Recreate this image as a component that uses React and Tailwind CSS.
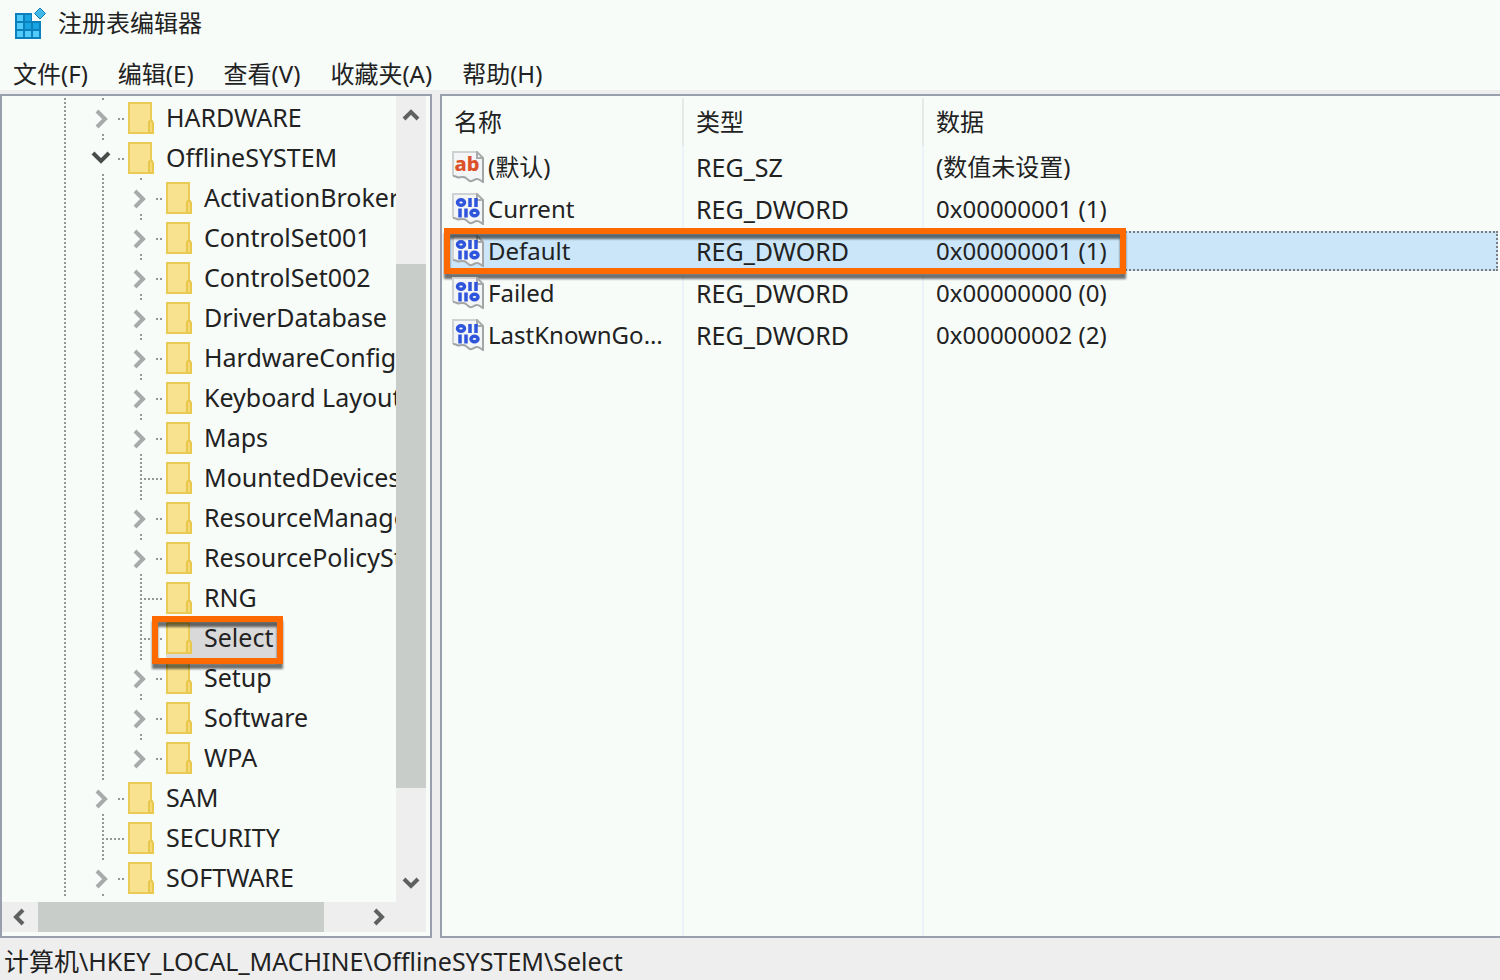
import { useState } from "react";

const MENU = ["文件(F)", "编辑(E)", "查看(V)", "收藏夹(A)", "帮助(H)"];

const TREE = [
  { name: "HARDWARE", level: 1, state: "closed" },
  { name: "OfflineSYSTEM", level: 1, state: "open" },
  { name: "ActivationBroker", level: 2, state: "closed" },
  { name: "ControlSet001", level: 2, state: "closed" },
  { name: "ControlSet002", level: 2, state: "closed" },
  { name: "DriverDatabase", level: 2, state: "closed" },
  { name: "HardwareConfig", level: 2, state: "closed" },
  { name: "Keyboard Layout", level: 2, state: "closed" },
  { name: "Maps", level: 2, state: "closed" },
  { name: "MountedDevices", level: 2, state: "leaf" },
  { name: "ResourceManager", level: 2, state: "closed" },
  { name: "ResourcePolicyStore", level: 2, state: "closed" },
  { name: "RNG", level: 2, state: "leaf" },
  { name: "Select", level: 2, state: "leaf" },
  { name: "Setup", level: 2, state: "closed" },
  { name: "Software", level: 2, state: "closed" },
  { name: "WPA", level: 2, state: "closed", last: true },
  { name: "SAM", level: 1, state: "closed" },
  { name: "SECURITY", level: 1, state: "leaf" },
  { name: "SOFTWARE", level: 1, state: "closed" },
];

const VALUES = [
  { name: "(默认)", type: "REG_SZ", data: "(数值未设置)", text: true },
  { name: "Current", type: "REG_DWORD", data: "0x00000001 (1)" },
  { name: "Default", type: "REG_DWORD", data: "0x00000001 (1)" },
  { name: "Failed", type: "REG_DWORD", data: "0x00000000 (0)" },
  { name: "LastKnownGood", type: "REG_DWORD", data: "0x00000002 (2)" },
];

function RegeditIcon() {
  return (
    <svg width="32" height="32" viewBox="0 0 32 32" aria-hidden="true">
      <path d="M1 5h17v8h9v18H1z" fill="#0b80bd" />
      <path d="M3 7h6v6H3zM3 15h6v6H3zM3 23h6v6H3zM11 23h6v6h-6zM19 23h6v6h-6z" fill="#52cbfb" />
      <path d="M11 7h6v6h-6zM11 15h6v6h-6zM19 15h6v6h-6z" fill="#16a4e2" />
      <path d="M26 0l5.500 5.500-5.500 5.500-5.500-5.500z" fill="#42b8e8" stroke="#1681b3" />
    </svg>
  );
}

function FolderIcon() {
  return (
    <svg className="shrink-0" width="26" height="32" viewBox="0 0 26 32" aria-hidden="true">
      <path d="M1 1h22v30H1z" fill="#f8e290" stroke="#eacb55" strokeWidth="2" />
      <path d="M21 20l1-1h2l1 2v10h-4z" fill="#f5d974" stroke="#e8c84e" strokeWidth="2" />
    </svg>
  );
}

function ValueIcon({ text }) {
  return (
    <svg className="shrink-0" width="32" height="32" viewBox="0 0 32 32" aria-hidden="true">
      <path d="M1 1h24l6 6v24c-3-1-3-3-6-3s-4 3-7 2-3-4-7-4-4 1-6 0-3-1-4-1z" fill="#f4f5f7" />
      <path d="M1 25V1h24" fill="none" stroke="#cfd2d2" strokeWidth="2" />
      <path d="M25 1v6h6z" fill="#fff" stroke="#a9abab" strokeWidth="2" />
      <path d="M31 7v24c-3-1-3-3-6-3s-4 3-7 2-3-4-7-4-4 1-6 0-3-1-4-1" fill="none" stroke="#a3a5a6" strokeWidth="2" />
      {text ? (
        <text x="15" y="20" textAnchor="middle" fontSize="20" fontWeight="800" fill="#dc5129">ab</text>
      ) : (
        <g fill="none" stroke="#2f55dc" strokeWidth="3.5">
          <ellipse cx="9" cy="9.500" rx="3.500" ry="2.800" />
          <path d="M18 5v9M24 5v9M8 15.500v9M14 15.500v9" />
          <ellipse cx="22.500" cy="20" rx="3.500" ry="2.800" />
        </g>
      )}
    </svg>
  );
}

const ARROWS = {
  up: "M2 12l7-7 7 7",
  down: "M2 6l7 7 7-7",
  left: "M12 2L5 9l7 7",
  right: "M6 2l7 7-7 7",
};

function ScrollButton({ dir, label, className }) {
  return (
    <button type="button" aria-label={label} className={`flex shrink-0 items-center justify-center ${className}`}>
      <svg width="18" height="18" viewBox="0 0 18 18" fill="none" stroke="#5f6161" strokeWidth="4">
        <path d={ARROWS[dir]} />
      </svg>
    </button>
  );
}

function Guide() {
  return (
    <svg className="shrink-0" width="38" height="40" aria-hidden="true">
      <path d="M19 0v40" stroke="#969898" strokeWidth="2" strokeDasharray="2 2" />
    </svg>
  );
}

// dotted connector with the expand arrow of one node
function Branch({ state, last }) {
  const leaf = state === "leaf";
  return (
    <svg className="shrink-0 overflow-visible" width="38" height="40" fill="none" aria-hidden="true">
      <g stroke="#969898" strokeWidth="2" strokeDasharray="2 2">
        <path d={leaf ? "M19 0v40" : "M19 0v2"} />
        {!leaf && !last && <path d="M19 36v4" />}
        <path d={leaf ? "M22 21h18" : "M34 21h6"} />
      </g>
      {state === "closed" && <path d="M13 13l8 8-8 8" stroke="#a9abab" strokeWidth="4" />}
      {state === "open" && <path d="M9 15l8 8 8-8" stroke="#4a4c4c" strokeWidth="4" />}
    </svg>
  );
}

function TreeRow({ node, selected, onSelect }) {
  return (
    <li className="flex h-10 items-center pl-11">
      <Guide />
      {node.level === 2 && <Guide />}
      <Branch state={node.state} last={node.last} />
      <button
        type="button"
        onClick={onSelect}
        className={`relative ml-1.5 flex h-10 items-center whitespace-nowrap ${selected ? "bg-[#d9d9d9]" : ""}`}
      >
        <FolderIcon />
        <span className="pr-1 pb-0.5 pl-3">{node.name}</span>
        {selected && (
          <span className="pointer-events-none absolute -top-0.5 -right-1.5 -bottom-1.5 -left-3.5 z-10 border-6 border-[#ff6a00] drop-shadow-[0_5px_1px_rgba(0,0,0,0.55)]" />
        )}
      </button>
    </li>
  );
}

export default function App() {
  const [key, setKey] = useState("Select");
  const [value, setValue] = useState("Default");

  return (
    <div className="flex min-h-screen flex-col bg-[#f7fcf9] font-['Noto_Sans','Noto_Sans_CJK_SC',sans-serif] text-[24px] leading-8 text-[#222222]">
      <header className="flex h-12 items-center gap-3 pl-3.5">
        <RegeditIcon />
        <h1 className="pb-0.5">注册表编辑器</h1>
      </header>
      <nav className="flex h-[46px] items-end gap-[30px] border-b-4 border-[#eeeeee] pl-[13px]">
        {MENU.map((m) => (
          <button type="button" key={m}>{m}</button>
        ))}
      </nav>

      <main className="flex flex-1 gap-2 bg-[#eeeeee]">
        <section className="flex w-[432px] shrink-0 flex-col border-2 border-[#9a9fae] bg-[#f7fcf9] pr-1 pb-1">
          <div className="flex flex-1">
            <ul className="min-w-0 flex-1 overflow-hidden pt-0.5 text-[25px]">
              {TREE.map((node) => (
                <TreeRow key={node.name} node={node} selected={key === node.name} onSelect={() => setKey(node.name)} />
              ))}
            </ul>
            <div className="flex w-[30px] flex-col bg-[#eeeeee]">
              <ScrollButton dir="up" label="向上滚动" className="h-10" />
              <div className="flex-1 pt-32 pb-[74px]">
                <div className="h-full bg-[#c8cdc9]" />
              </div>
              <ScrollButton dir="down" label="向下滚动" className="h-10" />
            </div>
          </div>
          <div className="flex h-[30px] bg-[#eeeeee]">
            <ScrollButton dir="left" label="向左滚动" className="w-9" />
            <div className="flex-1 pr-9">
              <div className="h-full bg-[#c8cdc9]" />
            </div>
            <ScrollButton dir="right" label="向右滚动" className="w-9" />
            <div className="w-[30px]" />
          </div>
        </section>

        <section className="flex min-w-0 flex-1 flex-col border-2 border-r-0 border-[#9a9fae] bg-[#f7fcf9] pt-0.5">
          <table className="w-full flex-1 table-fixed text-left">
            <thead>
              <tr className="h-12">
                <th className="w-[241px] border-r-2 border-[#e6e9e8] pl-3 font-normal">名称</th>
                <th className="w-60 border-r-2 border-[#e6e9e8] pl-3 font-normal">类型</th>
                <th className="pl-3 font-normal">数据</th>
              </tr>
            </thead>
            <tbody>
              {VALUES.map((v) => (
                <tr key={v.name} onClick={() => setValue(v.name)} className="relative z-0 h-[42px]">
                  <td className="border-r-2 border-[#ebf3f9] pl-2.5">
                    {value === v.name && (
                      <>
                        <span className="absolute inset-y-px right-0.5 left-1 -z-10 border-2 border-dotted border-[#7b7f82] bg-[#cbe6f8]" />
                        <span className="pointer-events-none absolute -top-0.5 -bottom-0.5 left-0.5 z-10 w-[682px] border-6 border-[#ff6a00] drop-shadow-[0_5px_1px_rgba(0,0,0,0.55)]" />
                      </>
                    )}
                    <span className="flex items-center gap-1">
                      <ValueIcon text={v.text} />
                      <span className="truncate pr-3">{v.name}</span>
                    </span>
                  </td>
                  <td className="border-r-2 border-[#ebf3f9] pl-3 text-[25px]">{v.type}</td>
                  <td className="pl-3">{v.data}</td>
                </tr>
              ))}
              <tr>
                <td className="border-r-2 border-[#ebf3f9]" />
                <td className="border-r-2 border-[#ebf3f9]" />
                <td />
              </tr>
            </tbody>
          </table>
        </section>
      </main>

      <footer className="flex h-[42px] items-center bg-[#eeeeee] pt-1 pl-1 text-[25px]">
        计算机\HKEY_LOCAL_MACHINE\OfflineSYSTEM\Select
      </footer>
    </div>
  );
}
